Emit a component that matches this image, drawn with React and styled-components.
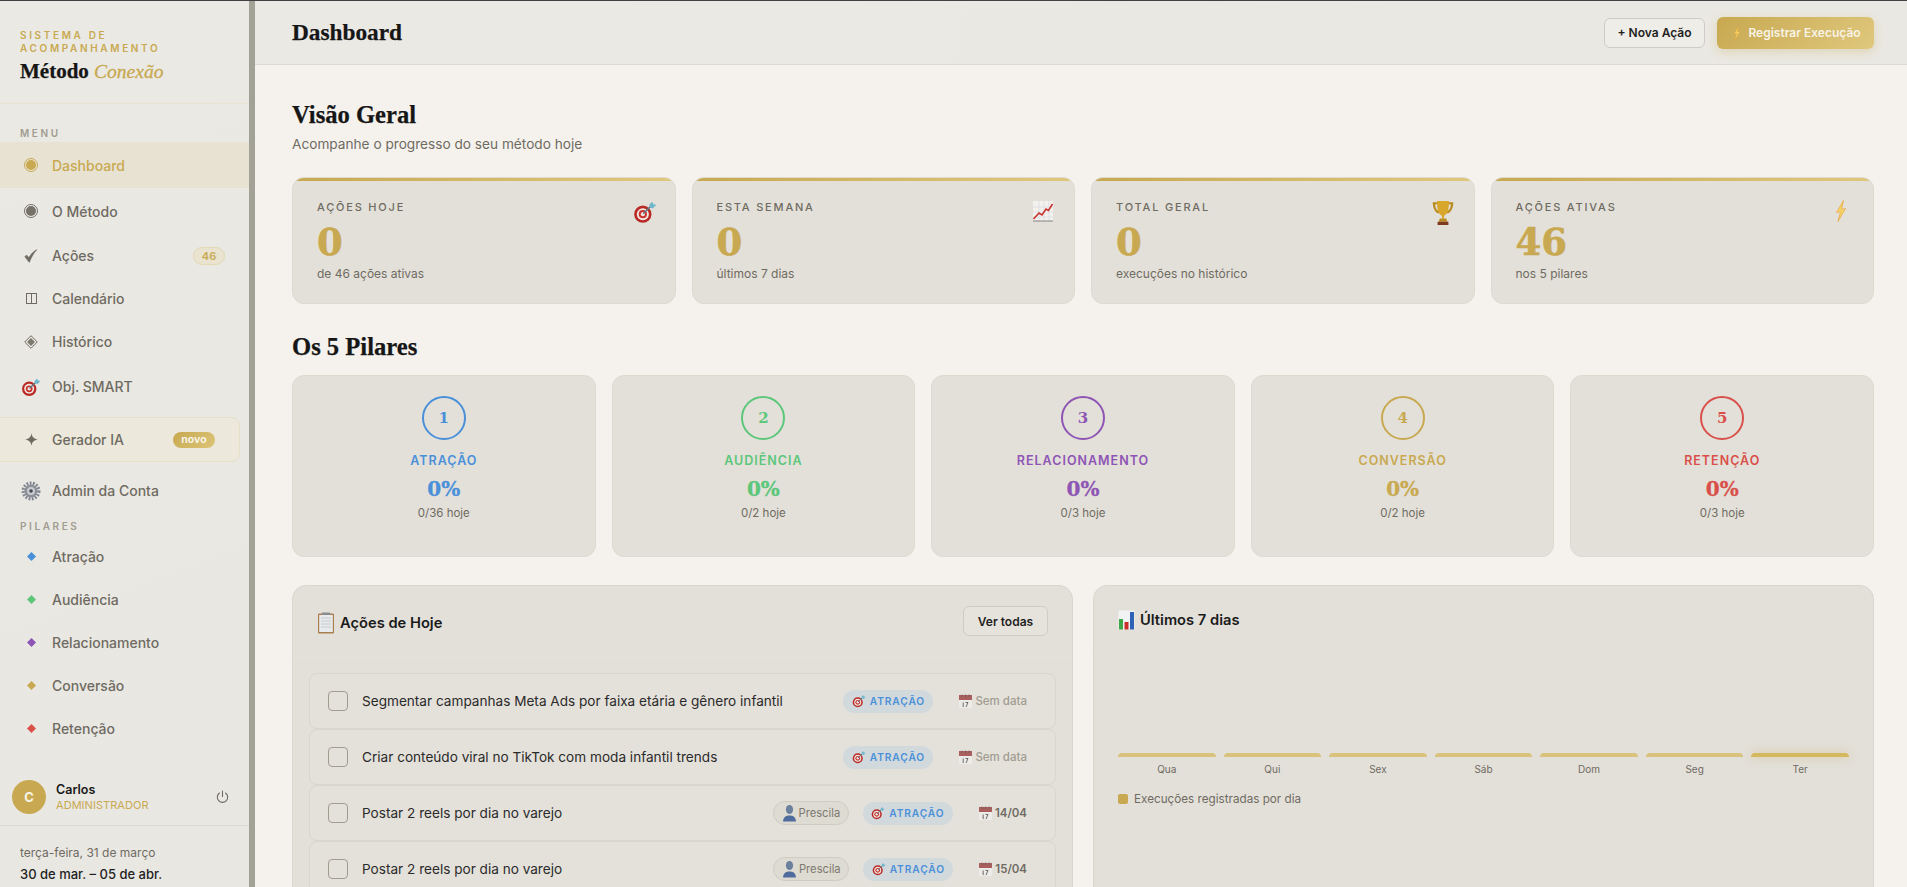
import React from 'react'
import styled, { createGlobalStyle } from 'styled-components'

const sans = `'Inter', 'Liberation Sans', sans-serif`
const serif = `'Liberation Serif', 'DejaVu Serif', serif`
const numeric = `'DejaVu Serif', 'Liberation Serif', serif`
const gold = '#c8a951'

const GlobalStyle = createGlobalStyle`
  * { box-sizing: border-box; }
  html, body { margin: 0; height: 100%; overflow: hidden; background: #f5f2ed; }
  body { font-family: ${sans}; color: #1a1a1a; }
  #root { height: 100%; }
`

const Page = styled.div`
  display: flex;
  height: 887px;
  overflow: hidden;
  border-top: 1px solid #3f4240;
`

const Sidebar = styled.aside`
  width: 255px;
  flex: none;
  display: flex;
  flex-direction: column;
  background: linear-gradient(160deg, #ebe9e4, #e9e7e2);
  border-right: 6px solid #a3a296;
`

const Brand = styled.div`
  height: 103px;
  padding: 28px 20px 0;
  border-bottom: 1px solid #e8e2cf;
`

const BrandKicker = styled.div`
  font-size: 10px;
  line-height: 13px;
  font-weight: 600;
  letter-spacing: 2.65px;
  color: ${gold};
`

const BrandName = styled.div`
  margin-top: 4px;
  font-family: ${serif};
  font-size: 21px;
  line-height: 24px;
  font-weight: 700;
  color: #161616;
  white-space: nowrap;
  -webkit-text-stroke: 0.25px #161616;
  em {
    font-size: 19.5px;
    font-weight: 400;
    color: ${gold};
    -webkit-text-stroke: 0.3px ${gold};
  }
`

const SectionLabel = styled.div`
  padding: 0 0 ${({ $bottom }) => $bottom}px 20px;
  height: ${({ $h }) => $h}px;
  display: flex;
  align-items: flex-end;
  font-size: 10px;
  line-height: 13px;
  font-weight: 600;
  letter-spacing: 2.6px;
  color: #a09c90;
`

const NavRow = styled.div`
  display: flex;
  align-items: center;
  height: ${({ $h }) => $h || 43}px;
  padding-right: 24px;
  font-size: 14px;
  font-weight: 500;
  color: ${({ $active }) => ($active ? gold : '#6f6b62')};
  background: ${({ $active }) => ($active ? '#e8e2d2' : 'transparent')};
`

const NavIcon = styled.span`
  width: 52px;
  flex: none;
  display: flex;
  justify-content: center;
  padding-left: 10px;
`

const NavText = styled.span`
  flex: 1;
`

const CountBadge = styled.span`
  width: 32px;
  height: 18px;
  border-radius: 9px;
  display: flex;
  align-items: center;
  justify-content: center;
  font-size: 11px;
  font-weight: 600;
  color: ${gold};
  background: #e9e3cf;
  border: 1px solid #e3d9b8;
`

const AiBox = styled.div`
  margin: 7px 9px 5px -1px;
  height: 45px;
  display: flex;
  align-items: center;
  padding-right: 24px;
  border: 1px solid #e6dfc9;
  border-radius: 0 8px 8px 0;
  background: #ece8dc;
  font-size: 14px;
  font-weight: 500;
  color: #6f6b62;
`

const NewBadge = styled.span`
  width: 42px;
  height: 16px;
  border-radius: 8px;
  display: flex;
  align-items: center;
  justify-content: center;
  font-size: 10.5px;
  font-weight: 700;
  color: #f7f3e6;
  background: linear-gradient(135deg, ${gold}, #dcc478);
`

const SidebarNav = styled.nav`
  flex: 1;
`

const UserBlock = styled.div`
  height: 46px;
  display: flex;
  align-items: flex-start;
  padding: 0 20px 0 12px;
  border-bottom: 1px solid #dcdad4;
`

const Avatar = styled.div`
  width: 34px;
  height: 34px;
  border-radius: 50%;
  flex: none;
  display: flex;
  align-items: center;
  justify-content: center;
  background: ${gold};
  color: #f7f3e6;
  font-size: 13px;
  font-weight: 700;
`

const UserText = styled.div`
  flex: 1;
  margin: 1px 0 0 10px;
`

const UserName = styled.div`
  font-size: 12.5px;
  line-height: 17px;
  font-weight: 600;
  color: #1a1a1a;
`

const UserRole = styled.div`
  font-size: 11px;
  line-height: 14px;
  letter-spacing: 0.05px;
  color: ${gold};
`

const PowerButton = styled.div`
  margin-top: 10px;
  display: flex;
  color: #6f6b62;
`

const DateBlock = styled.div`
  height: 61px;
  padding: 19px 20px 0;
`

const DateToday = styled.div`
  font-size: 12px;
  line-height: 16px;
  color: #6f6b62;
`

const DateWeek = styled.div`
  margin-top: 5px;
  font-size: 13px;
  line-height: 17px;
  font-weight: 500;
  color: #1f1f1f;
  white-space: nowrap;
`

const Main = styled.main`
  flex: 1;
  min-width: 0;
  display: flex;
  flex-direction: column;
`

const TopBar = styled.header`
  height: 64px;
  flex: none;
  display: flex;
  align-items: center;
  gap: 12px;
  padding: 0 33px 0 37px;
  background: linear-gradient(100deg, #ebe9e4, #eae8e2);
  border-bottom: 1px solid #dbd9d3;
`

const PageTitle = styled.h1`
  flex: 1;
  margin: 0;
  font-family: ${serif};
  font-size: 23.3px;
  font-weight: 700;
  color: #161616;
  -webkit-text-stroke: 0.25px #161616;
`

const OutlineButton = styled.button`
  height: 30px;
  width: ${({ $w }) => $w}px;
  padding: 0;
  border: 1px solid #cfccc5;
  border-radius: 6px;
  background: #efede8;
  font-family: ${sans};
  font-size: 12px;
  font-weight: 600;
  color: #1f1f1f;
`

const PrimaryButton = styled.button`
  height: 32px;
  width: 157px;
  padding: 0;
  border: none;
  border-radius: 6px;
  display: flex;
  align-items: center;
  justify-content: center;
  gap: 4px;
  background: linear-gradient(135deg, ${gold}, #dfc77c);
  box-shadow: 0 3px 10px rgba(200, 169, 81, 0.3);
  font-family: ${sans};
  font-size: 12px;
  font-weight: 600;
  color: #f7f3e6;
`

const Content = styled.div`
  flex: 1;
  padding: 36px 33px 0 37px;
  overflow: hidden;
`

const Heading = styled.h2`
  margin: 0;
  font-family: ${serif};
  font-size: 24.6px;
  line-height: 28px;
  font-weight: 700;
  color: #161616;
  -webkit-text-stroke: 0.25px #161616;
`

const Subtitle = styled.p`
  margin: 5px 0 0;
  font-size: 13.65px;
  line-height: 20px;
  color: #6f6b62;
`

const StatGrid = styled.div`
  margin-top: 23px;
  display: grid;
  grid-template-columns: repeat(4, 1fr);
  gap: 16px;
`

const StatCard = styled.div`
  position: relative;
  height: 127px;
  padding: 22px 24px 0;
  overflow: hidden;
  border: 1px solid #dedad0;
  border-radius: 12px;
  background: #e3e0d9;
  &::before {
    content: '';
    position: absolute;
    left: 0;
    right: 0;
    top: 0;
    height: 3px;
    background: linear-gradient(90deg, ${gold}, #dfc77c);
  }
`

const StatLabel = styled.div`
  font-size: 11px;
  line-height: 15px;
  font-weight: 500;
  letter-spacing: 1.8px;
  color: #6f6b62;
`

const StatValue = styled.div`
  margin-top: 5px;
  font-family: ${numeric};
  font-size: 37px;
  line-height: 44px;
  font-weight: 700;
  color: ${gold};
  -webkit-text-stroke: 0.6px ${gold};
`

const StatSub = styled.div`
  margin-top: 1px;
  font-size: 12px;
  line-height: 17px;
  color: #6f6b62;
`

const StatIcon = styled.div`
  position: absolute;
  right: ${({ $right }) => $right}px;
  top: 22px;
  display: flex;
`

const PillarHeading = styled(Heading)`
  margin-top: 29px;
`

const PillarGrid = styled.div`
  margin-top: 14px;
  display: grid;
  grid-template-columns: repeat(5, 1fr);
  gap: 16px;
`

const PillarCard = styled.div`
  height: 182px;
  padding: 20px 20px 0;
  display: flex;
  flex-direction: column;
  align-items: center;
  border: 1px solid #dedad0;
  border-radius: 12px;
  background: #e3e0d9;
  color: ${({ $color }) => $color};
`

const PillarNumber = styled.div`
  width: 44px;
  height: 44px;
  border-radius: 50%;
  border: 2px solid currentColor;
  display: flex;
  align-items: center;
  justify-content: center;
  font-family: ${numeric};
  font-size: 15px;
  font-weight: 700;
`

const PillarName = styled.div`
  margin-top: 12px;
  font-size: 12.5px;
  line-height: 17px;
  font-weight: 600;
  letter-spacing: 1px;
`

const PillarPercent = styled.div`
  margin-top: 6px;
  font-family: ${numeric};
  font-size: 20px;
  line-height: 28px;
  font-weight: 700;
  -webkit-text-stroke: 0.3px currentColor;
`

const PillarCount = styled.div`
  margin-top: 2px;
  font-size: 11.5px;
  line-height: 16px;
  color: #6f6b62;
`

const PillarTrack = styled.div`
  margin-top: 11px;
  width: 100%;
  height: 1px;
  background: #e5e2db;
`

const PanelGrid = styled.div`
  margin-top: 28px;
  display: grid;
  grid-template-columns: 1fr 1fr;
  gap: 20px;
`

const Panel = styled.section`
  height: 400px;
  border: 1px solid #d9d6ce;
  border-radius: 14px;
  background: #e3e0d9;
  padding: 0 ${({ $pad }) => $pad}px;
`

const PanelHeader = styled.div`
  height: ${({ $h }) => $h}px;
  margin: 0 ${({ $pad }) => -$pad}px;
  padding: ${({ $top }) => $top}px 24px 0;
  display: flex;
  align-items: flex-start;
  justify-content: space-between;
  border-bottom: 1px solid #e5e2db;
`

const PanelTitle = styled.h3`
  margin: ${({ $mt }) => $mt}px 0 0;
  display: flex;
  align-items: center;
  gap: 5px;
  font-size: 14.7px;
  line-height: 20px;
  font-weight: 600;
  color: #1a1a1a;
`

const SmallButton = styled(OutlineButton)`
  background: #e6e3dd;
`

const ActionList = styled.div`
  margin-top: 16px;
  display: flex;
  flex-direction: column;
`

const ActionRow = styled.div`
  height: 56px;
  padding: 0 19px 0 18px;
  display: flex;
  align-items: center;
  border: 1px solid #d9d6ce;
  border-radius: 8px;
  background: #e4e1da;
`

const Checkbox = styled.span`
  width: 20px;
  height: 20px;
  flex: none;
  border: 1.5px solid #a09c90;
  border-radius: 4px;
`

const ActionText = styled.span`
  flex: 1;
  margin-left: 14px;
  font-size: 13.6px;
  color: #2a2a2a;
  white-space: nowrap;
`

const OwnerPill = styled.span`
  height: 24px;
  width: 76px;
  margin-right: 14px;
  display: flex;
  align-items: center;
  justify-content: center;
  gap: 2px;
  border: 1px solid #cfccc5;
  border-radius: 12px;
  background: #dedbd3;
  font-size: 11.2px;
  color: #7d796f;
`

const PillarPill = styled.span`
  height: 23px;
  width: 90px;
  display: flex;
  align-items: center;
  justify-content: center;
  gap: 4px;
  border-radius: 12px;
  background: #d2d9dd;
  font-size: 10.2px;
  font-weight: 600;
  letter-spacing: 0.9px;
  color: #4a90d9;
`

const DatePill = styled.span`
  height: 24px;
  padding: 0 8px;
  margin-left: 16px;
  display: flex;
  align-items: center;
  justify-content: center;
  gap: 2px;
  border: 1px ${({ $empty }) => ($empty ? 'dashed #e3e0d9' : 'solid #e4e1da')};
  border-radius: 12px;
  font-size: 11.5px;
  font-weight: ${({ $empty }) => ($empty ? 500 : 600)};
  color: ${({ $empty }) => ($empty ? '#a09c90' : '#6f6b62')};
`

const Chart = styled.div`
  margin-top: 101px;
  display: grid;
  grid-template-columns: repeat(7, 1fr);
  gap: 8px;
`

const ChartColumn = styled.div`
  display: flex;
  flex-direction: column;
  align-items: center;
`

const ChartBar = styled.div`
  width: 100%;
  height: 4px;
  border-radius: 4px 4px 0 0;
  background: ${({ $today }) => ($today ? '#d6b85f' : '#d9c27c')};
  box-shadow: ${({ $today }) => ($today ? '0 0 10px rgba(200, 169, 81, 0.5)' : 'none')};
`

const ChartLabel = styled.span`
  margin-top: 5px;
  font-size: 10px;
  line-height: 14px;
  color: #6f6b62;
`

const Legend = styled.div`
  margin-top: 15px;
  display: flex;
  align-items: center;
  gap: 6px;
  font-size: 11.7px;
  line-height: 16px;
  color: #6f6b62;
`

const LegendSwatch = styled.span`
  width: 10px;
  height: 10px;
  border-radius: 2px;
  background: ${gold};
`

const RingIcon = ({ color }) => (
  <svg width="14" height="14" viewBox="0 0 14 14">
    <circle cx="7" cy="7" r="6.5" fill="none" stroke={color} strokeWidth="1" />
    <circle cx="7" cy="7" r="5" fill={color} />
  </svg>
)

const CheckIcon = () => (
  <svg width="14" height="14" viewBox="0 0 14 14">
    <path d="M0.8 7.8 L2.6 6 L4.8 8.6 C6.8 5.2 9.4 2.6 13 0.6 C10 3.8 7.4 8 5.3 13.4 Z" fill="#6f6b62" stroke="#6f6b62" strokeWidth="0.5" strokeLinejoin="round" />
  </svg>
)

const ColumnsIcon = () => (
  <svg width="11" height="11" viewBox="0 0 11 11" fill="none" stroke="#6f6b62" strokeWidth="1">
    <rect x="0.5" y="0.5" width="10" height="10" />
    <path d="M5.5 0.5 V10.5" />
  </svg>
)

const DiamondRingIcon = () => (
  <svg width="14" height="14" viewBox="0 0 14 14">
    <path d="M7 0.7 L13.3 7 L7 13.3 L0.7 7 Z" fill="none" stroke="#6f6b62" strokeWidth="1" />
    <path d="M7 3 L11 7 L7 11 L3 7 Z" fill="#7d796f" />
  </svg>
)

const SparkIcon = () => (
  <svg width="13" height="13" viewBox="0 0 13 13">
    <path d="M6.5 0 C7 4 9 6 13 6.5 C9 7 7 9 6.5 13 C6 9 4 7 0 6.5 C4 6 6 4 6.5 0 Z" fill="#6f6b62" />
  </svg>
)

const DiamondIcon = ({ color }) => (
  <svg width="9" height="9" viewBox="0 0 9 9">
    <path d="M4.5 0 L9 4.5 L4.5 9 L0 4.5 Z" fill={color} />
  </svg>
)

const TargetIcon = ({ size = 20 }) => (
  <svg width={size} height={size} viewBox="0 0 20 20">
    <circle cx="8.2" cy="11.8" r="7.2" fill="#b92a26" />
    <circle cx="8.2" cy="11.8" r="5" fill="#f3e9e4" />
    <circle cx="8.2" cy="11.8" r="3.4" fill="#c8332e" />
    <circle cx="8.2" cy="11.8" r="1.7" fill="#f3e9e4" />
    <path d="M8.5 11.5 L15 5" stroke="#5a7a85" strokeWidth="1.2" />
    <path d="M13.5 4 L16 1.5 L17 3.5 L19.5 4 L16.5 7 L14.5 6.5 Z" fill="#6fb8cc" />
  </svg>
)

const TrendIcon = () => (
  <svg width="22" height="22" viewBox="0 0 22 22">
    <rect x="1" y="1" width="20" height="20" fill="#f2f1ee" />
    <path d="M1 7 H21 M1 12 H21 M1 17 H21 M7 1 V21 M12 1 V21 M17 1 V21" stroke="#cfd3d8" strokeWidth="0.5" />
    <path d="M1.5 19 L7 13 L10 15 L14 9 L16.5 10.5 L20.5 4" fill="none" stroke="#c8332e" strokeWidth="1.6" />
    <path d="M1 21 H21" stroke="#6b6b6b" strokeWidth="0.8" />
  </svg>
)

const TrophyIcon = () => (
  <svg width="24" height="26" viewBox="0 0 22 24">
    <path d="M1.5 2 H8 V4 H3.8 C3.8 8 5.5 10 8 11 L7 12.5 C3.5 11.5 1.5 7 1.5 2 Z M20.5 2 H14 V4 H18.2 C18.2 8 16.5 10 14 11 L15 12.5 C18.5 11.5 20.5 7 20.5 2 Z" fill="#b98a1f" />
    <path d="M5.5 1 H16.5 C16.5 9 15.5 13 12 14.5 V17 H10 V14.5 C6.5 13 5.5 9 5.5 1 Z" fill="#d9a62c" />
    <path d="M8 17 H14 L15 20 H7 Z" fill="#b98a1f" />
    <path d="M6 20 H16 V23 H6 Z" fill="#7d3a1e" />
  </svg>
)

const BoltIcon = ({ size = 22 }) => (
  <svg width={size} height={size} viewBox="0 0 22 22">
    <path d="M13.5 0.5 L6.5 12.5 L10.5 11.5 L8 21.5 L15.5 8.5 L11.5 9.5 Z" fill="#f6d667" stroke="#e8a23e" strokeWidth="0.7" strokeLinejoin="round" />
  </svg>
)

const GearIcon = () => (
  <svg width="20" height="20" viewBox="0 0 20 20">
    <circle cx="10" cy="10" r="7.8" fill="none" stroke="#7f8590" strokeWidth="3.4" strokeDasharray="1.8 1.4" />
    <circle cx="10" cy="10" r="6.5" fill="#8a8f98" />
    <circle cx="10" cy="10" r="4" fill="#c9cbd0" />
    <circle cx="10" cy="10" r="1.8" fill="#44474e" />
  </svg>
)

const ClipboardIcon = () => (
  <svg width="18" height="22" viewBox="0 0 18 22">
    <rect x="1" y="1.5" width="16" height="20" rx="1" fill="#a97f4f" />
    <rect x="2.2" y="3" width="13.6" height="17" fill="#e8eaec" />
    <path d="M4 6 H14 M4 9 H14 M4 12 H14 M4 15 H14" stroke="#bfc4c9" strokeWidth="0.8" />
    <rect x="5" y="0.5" width="8" height="2.5" fill="#8a8d90" />
  </svg>
)

const BarsIcon = () => (
  <svg width="17" height="20" viewBox="0 0 17 20">
    <rect x="0.5" y="0.5" width="16" height="19" fill="#f0f2f4" />
    <rect x="1" y="9" width="4" height="10.5" fill="#3fa64a" />
    <rect x="6.5" y="12" width="4" height="7.5" fill="#cc2f2a" />
    <rect x="12" y="2" width="4" height="17.5" fill="#2f62b5" />
  </svg>
)

const CalendarIcon = () => (
  <svg width="15" height="15" viewBox="0 0 15 15">
    <rect x="1" y="1" width="13" height="13" fill="#ecebe7" />
    <rect x="1" y="1" width="13" height="5" fill="#a95f5c" />
    <path d="M4 0.5 V3 M7.5 0.5 V3 M11 0.5 V3" stroke="#70605c" strokeWidth="0.8" />
    <path d="M5.2 8.5 V13 M7.5 8.5 H10 L8 13" fill="none" stroke="#5c5c5c" strokeWidth="0.9" />
  </svg>
)

const BustIcon = () => (
  <svg width="15" height="18" viewBox="0 0 15 18">
    <ellipse cx="7.5" cy="5.5" rx="3.6" ry="4.6" fill="#6c7f9c" />
    <path d="M1 17.5 C1.5 12.5 4 11.5 7.5 11.5 C11 11.5 13.5 12.5 14 17.5 Z" fill="#4f6c9c" />
  </svg>
)

const PowerIcon = () => (
  <svg width="13" height="14" viewBox="0 0 13 14" fill="none" stroke="currentColor" strokeWidth="1.1" strokeLinecap="round">
    <path d="M6.5 1 V6.5" />
    <path d="M3.4 3 A5.2 5.2 0 1 0 9.6 3" />
  </svg>
)

const menuItems = [
  { label: 'Dashboard', icon: <RingIcon color={gold} />, h: 46, active: true },
  { label: 'O Método', icon: <RingIcon color="#76726a" />, h: 46 },
  { label: 'Ações', icon: <CheckIcon />, h: 43, count: 46 },
  { label: 'Calendário', icon: <ColumnsIcon />, h: 43 },
  { label: 'Histórico', icon: <DiamondRingIcon />, h: 43 },
  { label: 'Obj. SMART', icon: <TargetIcon />, h: 47 }
]

const pillars = [
  { name: 'Atração', color: '#4a90d9', count: '0/36 hoje' },
  { name: 'Audiência', color: '#5cc77a', count: '0/2 hoje' },
  { name: 'Relacionamento', color: '#8e55b5', count: '0/3 hoje' },
  { name: 'Conversão', color: '#c8a951', count: '0/2 hoje' },
  { name: 'Retenção', color: '#d9504a', count: '0/3 hoje' }
]

const stats = [
  { label: 'AÇÕES HOJE', value: '0', sub: 'de 46 ações ativas', icon: <TargetIcon size={24} />, right: 18 },
  { label: 'ESTA SEMANA', value: '0', sub: 'últimos 7 dias', icon: <TrendIcon />, right: 20 },
  { label: 'TOTAL GERAL', value: '0', sub: 'execuções no histórico', icon: <TrophyIcon />, right: 19 },
  { label: 'AÇÕES ATIVAS', value: '46', sub: 'nos 5 pilares', icon: <BoltIcon />, right: 21 }
]

const actions = [
  { text: 'Segmentar campanhas Meta Ads por faixa etária e gênero infantil', date: 'Sem data' },
  { text: 'Criar conteúdo viral no TikTok com moda infantil trends', date: 'Sem data' },
  { text: 'Postar 2 reels por dia no varejo', owner: 'Prescila', date: '14/04' },
  { text: 'Postar 2 reels por dia no varejo', owner: 'Prescila', date: '15/04' }
]

const days = ['Qua', 'Qui', 'Sex', 'Sáb', 'Dom', 'Seg', 'Ter']

const App = () => {
  return (
    <>
      <GlobalStyle />
      <Page>
        <Sidebar>
          <Brand>
            <BrandKicker>SISTEMA DE ACOMPANHAMENTO</BrandKicker>
            <BrandName>
              Método <em>Conexão</em>
            </BrandName>
          </Brand>
          <SidebarNav>
            <SectionLabel $h={38} $bottom={2}>MENU</SectionLabel>
            {menuItems.map((item) => (
              <NavRow key={item.label} $h={item.h} $active={item.active}>
                <NavIcon>{item.icon}</NavIcon>
                <NavText>{item.label}</NavText>
                {item.count && <CountBadge>{item.count}</CountBadge>}
              </NavRow>
            ))}
            <AiBox>
              <NavIcon>
                <SparkIcon />
              </NavIcon>
              <NavText>Gerador IA</NavText>
              <NewBadge>novo</NewBadge>
            </AiBox>
            <NavRow $h={47}>
              <NavIcon>
                <GearIcon />
              </NavIcon>
              <NavText>Admin da Conta</NavText>
            </NavRow>
            <SectionLabel $h={21} $bottom={2}>PILARES</SectionLabel>
            {pillars.map((pillar) => (
              <NavRow key={pillar.name}>
                <NavIcon>
                  <DiamondIcon color={pillar.color} />
                </NavIcon>
                <NavText>{pillar.name}</NavText>
              </NavRow>
            ))}
          </SidebarNav>
          <UserBlock>
            <Avatar>C</Avatar>
            <UserText>
              <UserName>Carlos</UserName>
              <UserRole>ADMINISTRADOR</UserRole>
            </UserText>
            <PowerButton>
              <PowerIcon />
            </PowerButton>
          </UserBlock>
          <DateBlock>
            <DateToday>terça-feira, 31 de março</DateToday>
            <DateWeek>30 de mar. – 05 de abr.</DateWeek>
          </DateBlock>
        </Sidebar>
        <Main>
          <TopBar>
            <PageTitle>Dashboard</PageTitle>
            <OutlineButton $w={101}>+ Nova Ação</OutlineButton>
            <PrimaryButton>
              <BoltIcon size={14} />
              Registrar Execução
            </PrimaryButton>
          </TopBar>
          <Content>
            <Heading>Visão Geral</Heading>
            <Subtitle>Acompanhe o progresso do seu método hoje</Subtitle>
            <StatGrid>
              {stats.map((stat) => (
                <StatCard key={stat.label}>
                  <StatLabel>{stat.label}</StatLabel>
                  <StatValue>{stat.value}</StatValue>
                  <StatSub>{stat.sub}</StatSub>
                  <StatIcon $right={stat.right}>{stat.icon}</StatIcon>
                </StatCard>
              ))}
            </StatGrid>
            <PillarHeading>Os 5 Pilares</PillarHeading>
            <PillarGrid>
              {pillars.map((pillar, i) => (
                <PillarCard key={pillar.name} $color={pillar.color}>
                  <PillarNumber>{i + 1}</PillarNumber>
                  <PillarName>{pillar.name.toUpperCase()}</PillarName>
                  <PillarPercent>0%</PillarPercent>
                  <PillarCount>{pillar.count}</PillarCount>
                  <PillarTrack />
                </PillarCard>
              ))}
            </PillarGrid>
            <PanelGrid>
              <Panel $pad={16}>
                <PanelHeader $h={71} $pad={16} $top={20}>
                  <PanelTitle $mt={6}>
                    <ClipboardIcon />
                    Ações de Hoje
                  </PanelTitle>
                  <SmallButton $w={85}>Ver todas</SmallButton>
                </PanelHeader>
                <ActionList>
                  {actions.map((action) => (
                    <ActionRow key={action.date + action.text}>
                      <Checkbox />
                      <ActionText>{action.text}</ActionText>
                      {action.owner && (
                        <OwnerPill>
                          <BustIcon />
                          {action.owner}
                        </OwnerPill>
                      )}
                      <PillarPill>
                        <TargetIcon size={14} />
                        ATRAÇÃO
                      </PillarPill>
                      <DatePill $empty={action.date === 'Sem data'}>
                        <CalendarIcon />
                        {action.date}
                      </DatePill>
                    </ActionRow>
                  ))}
                </ActionList>
              </Panel>
              <Panel $pad={24}>
                <PanelHeader $h={66} $pad={24} $top={24}>
                  <PanelTitle $mt={0}>
                    <BarsIcon />
                    Últimos 7 dias
                  </PanelTitle>
                </PanelHeader>
                <Chart>
                  {days.map((day) => (
                    <ChartColumn key={day}>
                      <ChartBar $today={day === 'Ter'} />
                      <ChartLabel>{day}</ChartLabel>
                    </ChartColumn>
                  ))}
                </Chart>
                <Legend>
                  <LegendSwatch />
                  Execuções registradas por dia
                </Legend>
              </Panel>
            </PanelGrid>
          </Content>
        </Main>
      </Page>
    </>
  )
}

export default App
